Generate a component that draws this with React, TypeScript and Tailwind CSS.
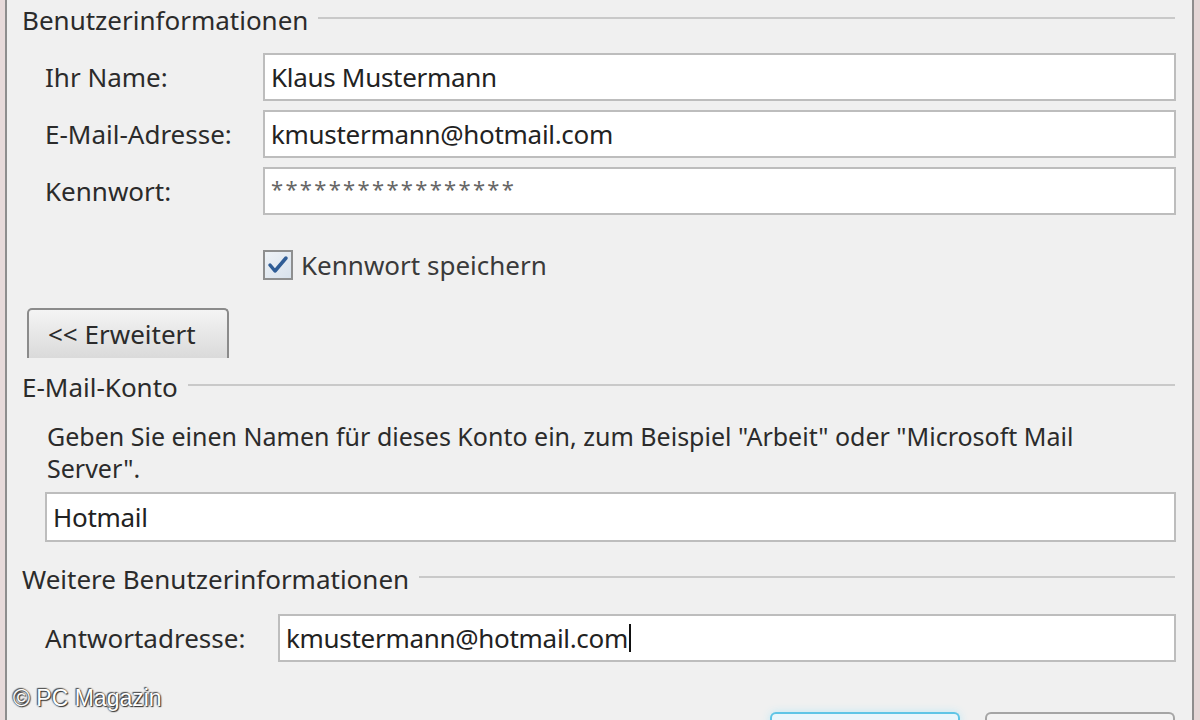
import React from "react";

const font = { fontFamily: '"Noto Sans", "Open Sans", sans-serif' };

function GroupHeader({ title }: { title: string }) {
  return (
    <div className="flex h-[40px] items-center pr-[17px]">
      <span className="text-[26px] leading-none text-[#2b2b2b]">{title}</span>
      <div className="ml-[10px] mt-[-4px] h-[2px] flex-1 bg-[#c9c9c9]" />
    </div>
  );
}

function Field({ value, tall = false, className = "" }: { value: string; tall?: boolean; className?: string }) {
  return (
    <div
      className={`flex ${tall ? "h-[50px]" : "h-[48px]"} items-center border-2 border-[#bdbdbd] bg-white pl-[6px] text-[26px] leading-none tracking-[-0.3px] text-[#222] ${className}`}
    >
      {value}
    </div>
  );
}

export default function App() {
  return (
    <div style={font} className="flex h-[720px] w-[1200px] overflow-hidden bg-[#f0f0f0]">
      {/* window frame left */}
      <div className="w-[5px] bg-[#e7dada]" />
      <div className="w-[2px] bg-[#8d8d8d]" />

      <div className="relative flex-1 pl-[15px]">
        {/* Benutzerinformationen */}
        <div>
          <GroupHeader title="Benutzerinformationen" />
          <div className="mt-[13px] flex flex-col gap-[9px] pr-[16px]">
            <div className="flex items-center">
              <span className="w-[241px] pl-[23px] text-[26px] leading-none text-[#2b2b2b]">Ihr Name:</span>
              <Field value="Klaus Mustermann" className="flex-1" />
            </div>
            <div className="flex items-center">
              <span className="w-[241px] pl-[23px] text-[26px] leading-none text-[#2b2b2b]">E-Mail-Adresse:</span>
              <Field value="kmustermann@hotmail.com" className="flex-1" />
            </div>
            <div className="flex items-center">
              <span className="w-[241px] pl-[23px] text-[26px] leading-none text-[#2b2b2b]">Kennwort:</span>
              <div className="flex h-[48px] flex-1 items-start border-2 border-[#bdbdbd] bg-white pl-[6px] pt-[8px] text-[22px] leading-none tracking-[2.3px] text-[#666]">
                *****************
              </div>
            </div>
          </div>

          {/* Kennwort speichern */}
          <div className="mt-[35px] flex items-center pl-[241px]">
            <div className="flex h-[30px] w-[30px] items-center justify-center border-2 border-[#8e8f8f] bg-gradient-to-br from-[#eef2f6] to-[#d8e2ec]">
              <svg width="22" height="20" viewBox="0 0 22 20">
                <path d="M3 10 L8 16 L19 3" fill="none" stroke="#2f5d96" strokeWidth="3.5" strokeLinecap="round" strokeLinejoin="round" />
              </svg>
            </div>
            <span className="ml-[8px] text-[26px] leading-none text-[#3a3a3a]">Kennwort speichern</span>
          </div>
        </div>

        {/* Erweitert button */}
        <div className="mt-[28px] pl-[5px]">
          <div className="flex h-[50px] w-[202px] items-center rounded-t-[5px] border-2 border-b-0 border-[#8b8b8b] bg-gradient-to-b from-[#f4f4f4] to-[#dadada] pl-[19px] text-[26px] leading-none text-[#2b2b2b]">
            &lt;&lt; Erweitert
          </div>
        </div>

        {/* E-Mail-Konto */}
        <div className="mt-[9px]">
          <GroupHeader title="E-Mail-Konto" />
          <p className="mt-[13px] pl-[25px] pr-[40px] text-[25px] leading-[32px] text-[#2b2b2b]">
            Geben Sie einen Namen für dieses Konto ein, zum Beispiel "Arbeit" oder "Microsoft Mail Server".
          </p>
          <div className="mt-[8px] pl-[23px] pr-[16px]">
            <Field value="Hotmail" tall />
          </div>
        </div>

        {/* Weitere Benutzerinformationen */}
        <div className="mt-[17px]">
          <GroupHeader title="Weitere Benutzerinformationen" />
          <div className="mt-[15px] flex items-center pr-[16px]">
            <span className="w-[256px] pl-[23px] text-[26px] leading-none text-[#2b2b2b]">Antwortadresse:</span>
            <div className="flex h-[48px] flex-1 items-center border-2 border-[#bdbdbd] bg-white pl-[6px] text-[26px] leading-none tracking-[-0.3px] text-[#222]">
              kmustermann@hotmail.com
              <span className="ml-[1px] h-[28px] w-[2px] bg-[#111]" />
            </div>
          </div>
        </div>

        {/* bottom buttons peeking in */}
        <div className="mt-[50px] flex gap-[25px] pl-[748px]">
          <div className="h-[20px] w-[190px] rounded-t-[6px] border-2 border-b-0 border-[#5fc5e6] bg-[#eaf6fb] shadow-[0_0_8px_#bfe8f5]" />
          <div className="h-[20px] w-[190px] rounded-t-[6px] border-2 border-b-0 border-[#a5a5a5] bg-[#f3f3f3]" />
        </div>

        {/* watermark */}
        <div
          className="absolute left-[6px] top-[687px] text-[23px] leading-none text-white"
          style={{
            fontFamily: '"Liberation Sans", Arial, sans-serif',
            textShadow: "0 0 2px #333, 1px 1px 1px #333, -1px -1px 1px #555",
          }}
        >
          © PC Magazin
        </div>
      </div>

      {/* window frame right */}
      <div className="w-[2px] bg-[#8d8d8d]" />
      <div className="w-[6px] bg-[#e4d6d6]" />
    </div>
  );
}
